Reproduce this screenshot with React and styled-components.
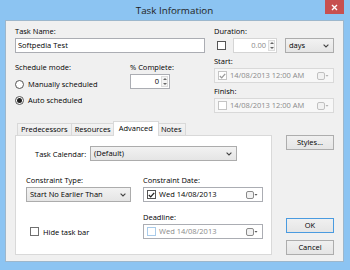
import React from 'react'
import styled, { createGlobalStyle } from 'styled-components'

const GlobalStyle = createGlobalStyle`
	html, body {
		margin: 0;
		padding: 0;
	}
	body {
		background: #8cc4f2;
		font-family: "Open Sans", "Liberation Sans", sans-serif;
	}
`

const Window = styled.div`
	width: 350px;
	height: 270px;
	box-sizing: border-box;
	padding: 0 6px 8px 5px;
	background: #8cc4f2;
	display: flex;
	flex-direction: column;
	font-size: 7.5px;
	color: #000;
`

const TitleBar = styled.div`
	height: 20px;
	display: grid;
	grid-template-columns: 1fr auto 1fr;
	align-items: center;
`

const Title = styled.div`
	grid-column: 2;
	font-size: 9.8px;
	color: #222;
	padding-top: 1px;
`

const CloseButton = styled.div`
	grid-column: 3;
	justify-self: end;
	align-self: start;
	width: 19px;
	height: 14px;
	background: #c75050;
	display: flex;
	align-items: center;
	justify-content: center;
`

const Client = styled.div`
	flex: 1;
	box-sizing: border-box;
	background: #f0f0f0;
	border: 1px solid #9db7cc;
	padding: 5px 9px 6px 9px;
	display: flex;
	flex-direction: column;
`

const TopSection = styled.div`
	display: flex;
	gap: 9px;
`

const Column = styled.div`
	width: ${p => p.$width}px;
	display: flex;
	flex-direction: column;
`

const Label = styled.div`
	height: 11px;
	line-height: 11px;
	white-space: nowrap;
	margin-top: ${p => p.$mt || 0}px;
	color: ${p => (p.$muted ? '#6d6d6d' : '#000')};
`

const TextInput = styled.div`
	height: 15px;
	box-sizing: border-box;
	margin-top: 1px;
	border: 1px solid #abadb3;
	background: #fff;
	padding: 0 2px;
	line-height: 13px;
`

const ScheduleRow = styled.div`
	margin-top: 9px;
	display: flex;
`

const ScheduleBlock = styled.div`
	width: 115px;
	display: flex;
	flex-direction: column;
`

const RadioList = styled.div`
	margin-top: 5px;
	display: flex;
	flex-direction: column;
	gap: 4px;
`

const OptionRow = styled.div`
	height: ${p => p.$h || 12}px;
	display: flex;
	align-items: center;
	gap: 4px;
	margin-left: ${p => p.$ml || 0}px;
	white-space: nowrap;
`

const Radio = styled.div`
	width: 9px;
	height: 9px;
	box-sizing: border-box;
	border-radius: 50%;
	border: 1px solid #555;
	background: #fff;
	display: flex;
	align-items: center;
	justify-content: center;

	&::after {
		content: '';
		width: 5px;
		height: 5px;
		border-radius: 50%;
		background: ${p => (p.$checked ? '#222' : 'transparent')};
	}
`

const Check = styled.div`
	width: 9px;
	height: 9px;
	flex: none;
	box-sizing: border-box;
	border: 1px solid ${p => p.$border || '#555'};
	background: #fff;
	display: flex;
	align-items: center;
	justify-content: center;
	margin-left: ${p => p.$ml || 0}px;
`

const SpinBox = styled.div`
	width: ${p => p.$width}px;
	height: 15px;
	box-sizing: border-box;
	margin-top: 1px;
	margin-left: ${p => p.$ml || 0}px;
	border: 1px solid ${p => (p.$disabled ? '#d5d5d5' : '#abadb3')};
	background: #fff;
	display: flex;
	align-items: center;
	justify-content: flex-end;
	color: ${p => (p.$disabled ? '#8a8a8a' : '#000')};
`

const SpinValue = styled.span`
	padding-right: 2px;
	line-height: 13px;
`

const SpinButtons = styled.div`
	width: 7px;
	height: 11px;
	margin-right: 1px;
	box-sizing: border-box;
	border: 1px solid #dcdcdc;
	background: #f4f4f4;
	display: flex;
	flex-direction: column;
	align-items: center;
	justify-content: space-around;
`

const DurationRow = styled.div`
	display: flex;
	align-items: center;
`

const Combo = styled.div`
	width: ${p => p.$width}px;
	height: 15px;
	box-sizing: border-box;
	margin-top: ${p => p.$mt || 0}px;
	margin-left: ${p => p.$ml || 0}px;
	border: 1px solid #acacac;
	background: linear-gradient(#f2f2f2, #e5e5e5);
	display: flex;
	align-items: center;
	justify-content: space-between;
	padding: 0 4px 0 3px;
	line-height: 13px;
	white-space: nowrap;
`

const DateBox = styled.div`
	height: 15px;
	box-sizing: border-box;
	margin-top: 1px;
	border: 1px solid ${p => (p.$disabled ? '#d9d9d9' : '#abadb3')};
	background: ${p => (p.$disabled ? '#f7f7f7' : '#fff')};
	display: flex;
	align-items: center;
	padding: 0 4px 0 3px;
	gap: 3px;
	line-height: 13px;
	color: ${p => (p.$muted ? '#8a8a8a' : '#000')};
	white-space: nowrap;
`

const DateText = styled.span`
	flex: 1;
`

const BottomSection = styled.div`
	margin-top: 9px;
	display: flex;
`

const TabArea = styled.div`
	width: 257px;
	display: flex;
	flex-direction: column;
`

const TabStrip = styled.div`
	height: 13px;
	padding-left: 3px;
	display: flex;
	align-items: flex-end;
`

const Tab = styled.div`
	position: relative;
	z-index: ${p => (p.$active ? 1 : 0)};
	height: ${p => (p.$active ? 15 : 12)}px;
	box-sizing: border-box;
	line-height: ${p => (p.$active ? 12 : 11)}px;
	padding: 0 ${p => (p.$active ? 5 : 3)}px;
	margin-left: ${p => (p.$active ? -2 : -1)}px;
	margin-right: ${p => (p.$active ? -1 : 0)}px;
	margin-bottom: ${p => (p.$active ? -1 : 0)}px;
	border: 1px solid #d9d9d9;
	border-bottom: none;
	background: ${p => (p.$active ? '#fff' : 'linear-gradient(#f3f3f3, #ebebeb)')};
	white-space: nowrap;
`

const Panel = styled.div`
	height: 120px;
	box-sizing: border-box;
	border: 1px solid #d9d9d9;
	background: #fff;
	padding: 10px 0 0 10px;
	display: flex;
	flex-direction: column;
`

const CalendarRow = styled.div`
	margin-left: 9px;
	display: flex;
	align-items: center;
`

const CalendarLabel = styled.div`
	width: 55px;
	white-space: nowrap;
`

const ConstraintGrid = styled.div`
	margin-top: 14px;
	display: grid;
	grid-template-columns: 105px 120px;
	column-gap: 12px;
`

const Cell = styled.div`
	display: flex;
	flex-direction: column;
	align-self: ${p => p.$align || 'stretch'};
`

const ButtonColumn = styled.div`
	width: 48px;
	margin-left: 14px;
	margin-top: 13px;
	display: flex;
	flex-direction: column;
	justify-content: space-between;
`

const ButtonStack = styled.div`
	display: flex;
	flex-direction: column;
	gap: 7px;
`

const Button = styled.div`
	height: 15px;
	box-sizing: border-box;
	border: 1px solid ${p => (p.$default ? '#4a9be0' : '#adadad')};
	background: linear-gradient(#f0f0f0, #e5e5e5);
	display: flex;
	align-items: center;
	justify-content: center;
	line-height: 13px;
`

const Chevron = () => (
	<svg width="6" height="4" viewBox="0 0 6 4">
		<path d="M0.6 0.6 L3 3 L5.4 0.6" fill="none" stroke="#444" strokeWidth="1.1" />
	</svg>
)

const Tick = ({ color = '#222' }) => (
	<svg width="7" height="6" viewBox="0 0 7 6">
		<path d="M0.8 3 L2.7 4.9 L6.2 0.8" fill="none" stroke={color} strokeWidth="1.3" />
	</svg>
)

const Spinner = () => (
	<SpinButtons>
		<svg width="4" height="2" viewBox="0 0 4 2">
			<path d="M0 2 L2 0 L4 2 Z" fill="#666" />
		</svg>
		<svg width="4" height="2" viewBox="0 0 4 2">
			<path d="M0 0 L4 0 L2 2 Z" fill="#666" />
		</svg>
	</SpinButtons>
)

const CalendarGlyph = ({ muted }) => (
	<svg width="12" height="8" viewBox="0 0 12 8">
		<rect x="0.5" y="0.5" width="7" height="7" rx="1.5" fill="#f2f2f2" stroke={muted ? '#c0c0c0' : '#8a8a8a'} />
		<path d="M8.5 3 L11.5 3 L10 4.8 Z" fill={muted ? '#b0b0b0' : '#555'} />
	</svg>
)

const App = () => {
	return (
		<>
			<GlobalStyle />
			<Window>
				<TitleBar>
					<Title>Task Information</Title>
					<CloseButton>
						<svg width="7" height="7" viewBox="0 0 7 7">
							<path d="M1 1 L6 6 M6 1 L1 6" stroke="#fff" strokeWidth="1.4" />
						</svg>
					</CloseButton>
				</TitleBar>
				<Client>
					<TopSection>
						<Column $width={190}>
							<Label>Task Name:</Label>
							<TextInput>Softpedia Test</TextInput>
							<ScheduleRow>
								<ScheduleBlock>
									<Label>Schedule mode:</Label>
									<RadioList>
										<OptionRow>
											<Radio />
											Manually scheduled
										</OptionRow>
										<OptionRow>
											<Radio $checked />
											Auto scheduled
										</OptionRow>
									</RadioList>
								</ScheduleBlock>
								<Column $width={60}>
									<Label>% Complete:</Label>
									<SpinBox $width={40}>
										<SpinValue>0</SpinValue>
										<Spinner />
									</SpinBox>
								</Column>
							</ScheduleRow>
						</Column>
						<Column $width={120}>
							<Label>Duration:</Label>
							<DurationRow>
								<Check $ml={3} />
								<SpinBox $width={44} $ml={7} $disabled>
									<SpinValue>0.00</SpinValue>
									<Spinner />
								</SpinBox>
								<Combo $width={49} $ml={8} $mt={1}>
									days
									<Chevron />
								</Combo>
							</DurationRow>
							<Label $mt={3}>Start:</Label>
							<DateBox $disabled $muted>
								<Check $border="#c4c4c4">
									<Tick color="#9a9a9a" />
								</Check>
								<DateText>14/08/2013 12:00 AM</DateText>
								<CalendarGlyph muted />
							</DateBox>
							<Label $mt={3}>Finish:</Label>
							<DateBox $disabled $muted>
								<Check $border="#c4c4c4" />
								<DateText>14/08/2013 12:00 AM</DateText>
								<CalendarGlyph muted />
							</DateBox>
						</Column>
					</TopSection>
					<BottomSection>
						<TabArea>
							<TabStrip>
								<Tab>Predecessors</Tab>
								<Tab>Resources</Tab>
								<Tab $active>Advanced</Tab>
								<Tab>Notes</Tab>
							</TabStrip>
							<Panel>
								<CalendarRow>
									<CalendarLabel>Task Calendar:</CalendarLabel>
									<Combo $width={147}>
										(Default)
										<Chevron />
									</Combo>
								</CalendarRow>
								<ConstraintGrid>
									<Cell>
										<Label>Constraint Type:</Label>
										<Combo $width={105} $mt={1}>
											Start No Earlier Than
											<Chevron />
										</Combo>
									</Cell>
									<Cell>
										<Label>Constraint Date:</Label>
										<DateBox>
											<Check>
												<Tick />
											</Check>
											<DateText>Wed 14/08/2013</DateText>
											<CalendarGlyph />
										</DateBox>
									</Cell>
									<Cell $align="end">
										<OptionRow $h={15} $ml={4}>
											<Check $border="#707070" />
											Hide task bar
										</OptionRow>
									</Cell>
									<Cell>
										<Label $mt={10}>Deadline:</Label>
										<DateBox $muted>
											<Check $border="#a9cbea" />
											<DateText>Wed 14/08/2013</DateText>
											<CalendarGlyph />
										</DateBox>
									</Cell>
								</ConstraintGrid>
							</Panel>
						</TabArea>
						<ButtonColumn>
							<Button>Styles...</Button>
							<ButtonStack>
								<Button $default>OK</Button>
								<Button>Cancel</Button>
							</ButtonStack>
						</ButtonColumn>
					</BottomSection>
				</Client>
			</Window>
		</>
	)
}

export default App
